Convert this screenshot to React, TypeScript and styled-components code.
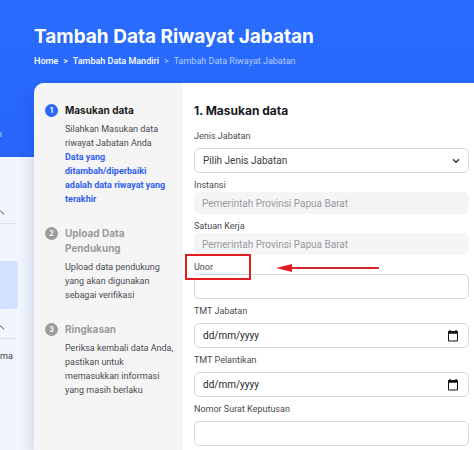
import React from "react";
import styled, { createGlobalStyle } from "styled-components";

const GlobalStyle = createGlobalStyle`
  *, *::before, *::after { box-sizing: border-box; }
  body {
    margin: 0;
    font-family: Roboto, "Liberation Sans", sans-serif;
    font-size: 10px;
    color: #4a4b50;
  }
  input, select, button { font: inherit; }
`;

const Page = styled.div`
  display: grid;
  grid-template-columns: 34px minmax(0, 1fr);
  height: 100vh;
  overflow: hidden;
  background: linear-gradient(#296dfe, #2764fa 157px, #f0f5fe 157px);
`;

const Sidebar = styled.aside`
  display: flex;
  flex-direction: column;
  padding-top: 132px;
  overflow: hidden;
`;

const SidebarMarks = styled.div`
  width: 2px;
  height: 5px;
  background: #6d9bff;
`;

const SidebarGroup = styled.div<{ $gap: number }>`
  display: flex;
  align-items: center;
  width: 16px;
  height: 22px;
  margin-top: ${(p) => p.$gap}px;
  border-bottom: 1px solid #dde3ee;
`;

const ToggleButton = styled.button`
  display: flex;
  padding: 0;
  border: 0;
  background: none;
  color: #44474f;
`;

const ActiveItem = styled.div`
  width: 18px;
  height: 48px;
  margin-top: 37px;
  border-radius: 0 4px 4px 0;
  background: #d3e2fe;
`;

const SidebarLink = styled.a`
  margin-top: 10px;
  line-height: 14px;
  font-size: 9px;
  color: #3e4149;
  text-decoration: none;
`;

const Main = styled.main`
  display: flex;
  flex-direction: column;
  min-width: 0;
`;

const Hero = styled.header`
  display: flex;
  flex-direction: column;
  gap: 6px;
  height: 83px;
  padding-top: 25px;
  color: #fff;
`;

const Title = styled.h1`
  margin: 0;
  font: 700 19px/24px Inter, sans-serif;
  white-space: nowrap;
`;

const Breadcrumb = styled.nav`
  display: flex;
  gap: 5px;
  font-size: 9px;
  line-height: 13px;
  font-weight: 500;
  white-space: nowrap;
`;

const Crumb = styled.a`
  color: #fff;
  text-decoration: none;
`;

const CurrentCrumb = styled.span`
  color: #b4ccff;
  font-weight: 400;
`;

const Card = styled.section`
  display: grid;
  grid-template-columns: 149px minmax(0, 1fr);
  flex: 1;
  overflow: hidden;
  border-radius: 10px 0 0 0;
  background: #fff;
  box-shadow: -2px 6px 14px rgba(30, 50, 110, 0.16);
`;

const Steps = styled.ol`
  display: flex;
  flex-direction: column;
  gap: 20px;
  margin: 0;
  padding: 20px 8px 0 11px;
  list-style: none;
  background: #f5f5f6;
`;

const Step = styled.li`
  display: grid;
  grid-template-columns: 13px minmax(0, 1fr);
  column-gap: 7px;
`;

const StepNumber = styled.span<{ $active?: boolean }>`
  display: grid;
  place-items: center;
  width: 13px;
  height: 13px;
  margin-top: 1px;
  border-radius: 50%;
  background: ${(p) => (p.$active ? "#2a68f5" : "#9c9c9c")};
  color: #fff;
  font: 700 7px/13px Inter, sans-serif;
`;

const StepTitle = styled.h3<{ $active?: boolean }>`
  margin: 0 0 4px;
  font: 700 10px/15px Inter, sans-serif;
  color: ${(p) => (p.$active ? "#1c1d20" : "#9a9a9b")};
`;

const StepText = styled.p`
  margin: 0;
  font-size: 9px;
  line-height: 14px;
  white-space: nowrap;
`;

const Notice = styled.strong`
  display: block;
  font-weight: 700;
  color: #2f5fee;
`;

const Form = styled.form`
  display: flex;
  flex-direction: column;
  gap: 6px;
  min-width: 0;
  padding: 19px 5px 0 11px;
`;

const FormTitle = styled.h2`
  margin: 0 0 5px;
  font: 700 12px/17px Inter, sans-serif;
  color: #17181b;
`;

const Field = styled.div<{ $tight?: boolean }>`
  position: relative;
  display: flex;
  flex-direction: column;
  gap: ${(p) => (p.$tight ? 0 : 5)}px;
`;

const Label = styled.label`
  font-size: 9px;
  line-height: 13px;
`;

const Control = styled.div`
  display: grid;
  align-items: center;
  grid-template-columns: minmax(0, 1fr) 26px;
`;

const TextInput = styled.input`
  grid-column: 1 / -1;
  grid-row: 1;
  width: 100%;
  height: 25px;
  padding: 0 8px;
  border: 1px solid #d9dadf;
  border-radius: 5px;
  background: #fff;
  color: #34363b;
  &::placeholder { color: #242529; opacity: 1; }
  &:disabled {
    height: 22px;
    border: 0;
    background: #f5f5f6;
    color: #98999d;
  }
`;

const Select = styled.select`
  grid-column: 1 / -1;
  grid-row: 1;
  width: 100%;
  height: 25px;
  padding: 0 8px;
  appearance: none;
  border: 1px solid #d9dadf;
  border-radius: 5px;
  background: #fff;
  color: #3b3d42;
`;

const IconSlot = styled.span`
  grid-column: 2;
  grid-row: 1;
  display: flex;
  justify-content: center;
  pointer-events: none;
`;

const CalendarButton = styled.button`
  grid-column: 2;
  grid-row: 1;
  display: flex;
  justify-content: center;
  padding: 0;
  margin-right: 6px;
  border: 0;
  background: none;
  color: #111;
`;

const Highlight = styled.span`
  position: absolute;
  top: -7px;
  left: -9px;
  width: 66px;
  height: 26px;
  border: 2px solid #e01f25;
  pointer-events: none;
`;

const Arrow = styled.svg`
  position: absolute;
  top: 2px;
  left: 82px;
  pointer-events: none;
`;

const ChevronUp = () => (
  <svg width="5" height="5" viewBox="0 0 5 5" fill="none" stroke="currentColor" aria-hidden="true">
    <path d="M-3 4.5 L0.5 1 L4.2 4.5" />
  </svg>
);

const ChevronDown = () => (
  <svg width="8" height="6" viewBox="0 0 8 6" fill="none" stroke="#35373c" strokeWidth="1.4" aria-hidden="true">
    <path d="M1 1.2 L4 4.3 L7 1.2" />
  </svg>
);

const CalendarIcon = () => (
  <svg width="10" height="12" viewBox="0 0 10 12" aria-hidden="true">
    <path
      fill="currentColor"
      fillRule="evenodd"
      d="M1.3 0H2.6V1H7.4V0H8.7V1H9.2Q10 1 10 1.8V10.6Q10 11.4 9.2 11.4H.8Q0 11.4 0 10.6V1.8Q0 1 .8 1H1.3ZM1 3.8V10.4H9V3.8Z"
    />
  </svg>
);

const DisabledField = ({ id, label }: { id: string; label: string }) => (
  <Field $tight>
    <Label htmlFor={id}>{label}</Label>
    <Control>
      <TextInput id={id} disabled defaultValue="Pemerintah Provinsi Papua Barat" />
    </Control>
  </Field>
);

const DateField = ({ id, label }: { id: string; label: string }) => (
  <Field>
    <Label htmlFor={id}>{label}</Label>
    <Control>
      <TextInput id={id} placeholder="dd/mm/yyyy" />
      <CalendarButton type="button" aria-label={label}>
        <CalendarIcon />
      </CalendarButton>
    </Control>
  </Field>
);

export default function App() {
  return (
    <>
      <GlobalStyle />
      <Page>
        <Sidebar>
          <SidebarMarks />
          <SidebarGroup $gap={65}>
            <ToggleButton type="button" aria-expanded="true"><ChevronUp /></ToggleButton>
          </SidebarGroup>
          <ActiveItem />
          <SidebarGroup $gap={8}>
            <ToggleButton type="button" aria-expanded="true"><ChevronUp /></ToggleButton>
          </SidebarGroup>
          <SidebarLink href="#">ma</SidebarLink>
        </Sidebar>
        <Main>
          <Hero>
            <Title>Tambah Data Riwayat Jabatan</Title>
            <Breadcrumb>
              <Crumb href="#">Home</Crumb>
              <span>&gt;</span>
              <Crumb href="#">Tambah Data Mandiri</Crumb>
              <CurrentCrumb>&gt;</CurrentCrumb>
              <CurrentCrumb>Tambah Data Riwayat Jabatan</CurrentCrumb>
            </Breadcrumb>
          </Hero>
          <Card>
            <Steps>
              <Step>
                <StepNumber $active>1</StepNumber>
                <div>
                  <StepTitle $active>Masukan data</StepTitle>
                  <StepText>
                    Silahkan Masukan data<br />riwayat Jabatan Anda
                    <Notice>Data yang<br />ditambah/diperbaiki<br />adalah data riwayat yang<br />terakhir</Notice>
                  </StepText>
                </div>
              </Step>
              <Step>
                <StepNumber>2</StepNumber>
                <div>
                  <StepTitle>Upload Data<br />Pendukung</StepTitle>
                  <StepText>Upload data pendukung<br />yang akan digunakan<br />sebagai verifikasi</StepText>
                </div>
              </Step>
              <Step>
                <StepNumber>3</StepNumber>
                <div>
                  <StepTitle>Ringkasan</StepTitle>
                  <StepText>Periksa kembali data Anda,<br />pastikan untuk<br />memasukkan informasi<br />yang masih berlaku</StepText>
                </div>
              </Step>
            </Steps>
            <Form>
              <FormTitle>1. Masukan data</FormTitle>
              <Field>
                <Label htmlFor="jenis">Jenis Jabatan</Label>
                <Control>
                  <Select id="jenis"><option>Pilih Jenis Jabatan</option></Select>
                  <IconSlot><ChevronDown /></IconSlot>
                </Control>
              </Field>
              <DisabledField id="instansi" label="Instansi" />
              <DisabledField id="satuan" label="Satuan Kerja" />
              <Field $tight>
                <Label htmlFor="unor">Unor</Label>
                <Control><TextInput id="unor" /></Control>
                <Highlight />
                <Arrow width="104" height="10" viewBox="0 0 104 10" aria-hidden="true">
                  <path d="M14 5H103" stroke="#cf2a2c" strokeWidth="2" />
                  <path d="M0 5L16 1V9Z" fill="#dd1c20" />
                </Arrow>
              </Field>
              <DateField id="tmt-jabatan" label="TMT Jabatan" />
              <DateField id="tmt-pelantikan" label="TMT Pelantikan" />
              <Field>
                <Label htmlFor="nomor">Nomor Surat Keputusan</Label>
                <Control><TextInput id="nomor" /></Control>
              </Field>
            </Form>
          </Card>
        </Main>
      </Page>
    </>
  );
}
